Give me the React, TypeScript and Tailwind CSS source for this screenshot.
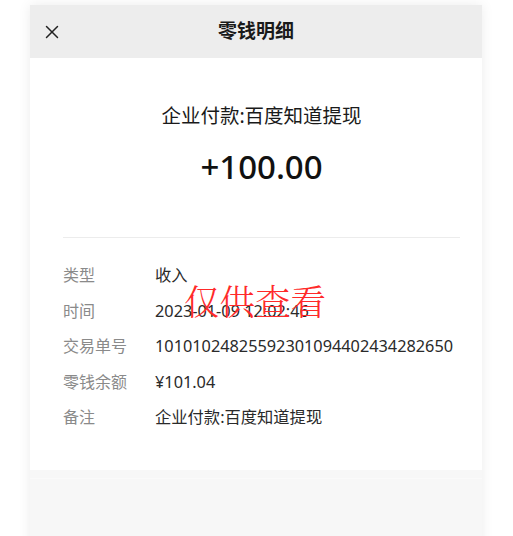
import { X } from "lucide-react";

const rows = [
  { label: "类型", value: "收入" },
  { label: "时间", value: "2023-01-09 12:02:46" },
  { label: "交易单号", value: "10101024825592301094402434282650" },
  { label: "零钱余额", value: "¥101.04" },
  { label: "备注", value: "企业付款:百度知道提现" },
];

const App = () => {
  return (
    <div
      className="h-[536px] w-[513px] overflow-hidden bg-white pt-[5px]"
      style={{ fontFamily: '"Noto Sans", "Noto Sans CJK SC", sans-serif' }}
    >
      <div className="mx-[30px] flex h-[600px] w-[452px] flex-col bg-[#f7f7f7] shadow-[0_0_12px_rgba(0,0,0,0.08)]">
        <div className="relative flex h-[53px] items-center justify-center bg-[#ededed]">
          <X className="absolute left-[11px] top-[16px] h-[22px] w-[22px] text-[#222]" strokeWidth={1.6} />
          <h1 className="text-[19px] font-semibold text-[#1a1a1a]">零钱明细</h1>
        </div>

        <div className="relative flex h-[412px] flex-col bg-white pl-[33px] pr-[22px]">
          <p className="mt-[45px] text-center text-[19.5px] leading-[26px] text-[#1a1a1a]">
            企业付款:百度知道提现
          </p>
          <p className="mt-[16px] text-center text-[33px] font-medium leading-[44px] text-[#111]">
            +100.00
          </p>
          <div className="mt-[48px] border-t border-[#ececec]" />

          <div className="mt-[25px] flex flex-col gap-[11px]">
            {rows.map((row) => (
              <div key={row.label} className="flex leading-[24.5px]">
                <span className="w-[92px] shrink-0 text-[16px] text-[#8a8a8a]">{row.label}</span>
                <span className="text-[16.3px] text-[#2a2a2a]">{row.value}</span>
              </div>
            ))}
          </div>

          <div
            className="absolute left-[154px] top-[224px] text-[35.5px] font-light leading-none text-[#ff2a2a]"
            style={{ fontFamily: '"Noto Serif CJK SC", "Noto Sans CJK SC", serif' }}
          >
            仅供查看
          </div>
        </div>

        <div className="mt-[8px] border-t border-[#fafafa]" />
      </div>
    </div>
  );
};

export default App;
